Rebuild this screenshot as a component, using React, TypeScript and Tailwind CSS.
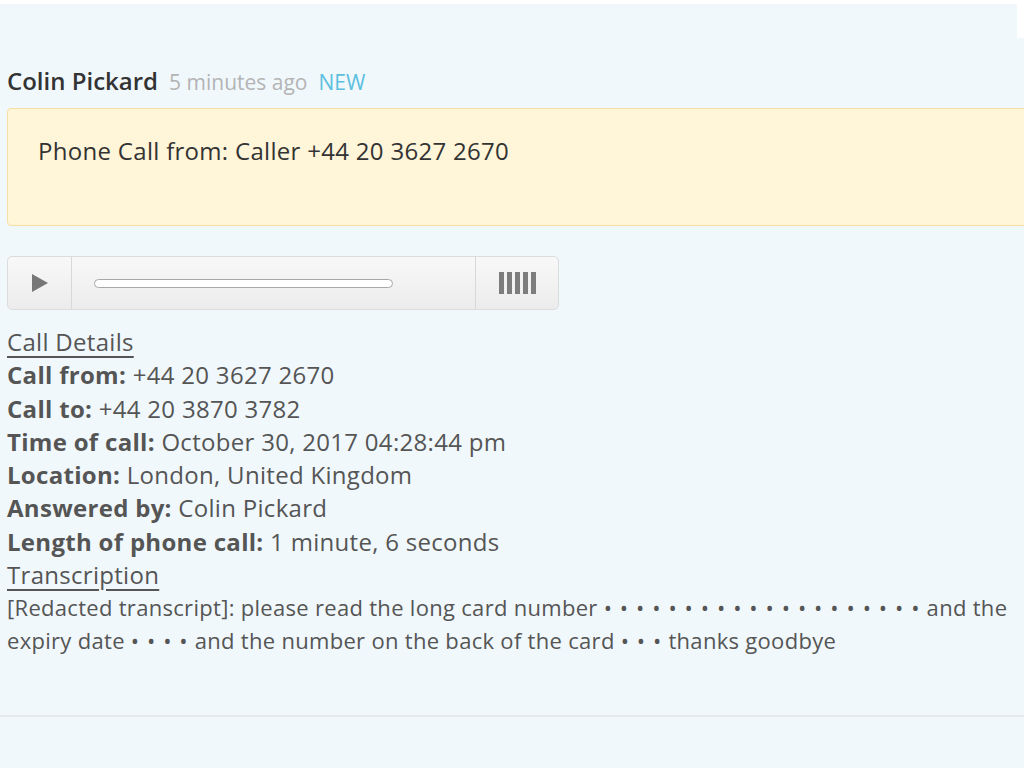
const font = { fontFamily: '"Open Sans", "Noto Sans", sans-serif' };

function Detail({ label, value }: { label: string; value: string }) {
    return (
        <div className="h-[33.3px] leading-[33.3px]">
            <span className="font-bold">{label}</span> {value}
        </div>
    );
}

function Dots({ n }: { n: number }) {
    return <span className="tracking-[1.1px]">{Array(n).fill("•").join(" ")}</span>;
}

function AudioPlayer() {
    return (
        <div className="flex h-[54px] w-[552px] rounded-[5px] border border-[#dcdcdc] bg-gradient-to-b from-[#f8f8f8] to-[#ececec]">
            {/* Play */}
            <div className="flex w-[64px] items-center justify-center border-r border-[#d8d8d8]">
                <svg width="18" height="20" viewBox="0 0 18 20">
                    <polygon points="1,1 17,10 1,19" fill="#777" />
                </svg>
            </div>

            {/* Progress */}
            <div className="flex flex-1 items-center px-[22px]">
                <div className="h-[9px] w-[299px] rounded-full border border-[#a8a8a8] bg-white" />
            </div>

            {/* Volume */}
            <div className="flex w-[83px] items-center justify-center gap-[3px] border-l border-[#d8d8d8]">
                {[0, 1, 2, 3, 4].map((i) => (
                    <div key={i} className="h-[22px] w-[5px] bg-[#7d7d7d]" />
                ))}
            </div>
        </div>
    );
}

export default function App() {
    return (
        <div className="relative min-h-[768px] w-[1024px] overflow-hidden bg-white pt-[4px]" style={font}>
            <div className="absolute right-0 top-0 h-[38px] w-[7px] bg-white" />
            <div className="min-h-[764px] bg-[#f0f8fc] text-[#555]">
                {/* Header */}
                <div className="flex items-baseline px-[7px] pt-[59px]">
                    <span className="text-[24px] font-semibold text-[#333]">Colin Pickard</span>
                    <span className="ml-[11px] text-[21px] text-[#b4b4b4]">5 minutes ago</span>
                    <span className="ml-[11px] text-[21px] text-[#5bc0de]">NEW</span>
                </div>

                {/* Message */}
                <div className="ml-[7px] mt-[9px] h-[118px] w-[1030px] rounded-[4px] border border-[#f5dfa2] bg-[#fff5d9] pl-[30px] pt-[24px] text-[24px] tracking-[0.3px] text-[#333]">
                    Phone Call from: Caller +44 20 3627 2670
                </div>

                <div className="ml-[7px] mt-[30px]">
                    <AudioPlayer />
                </div>

                {/* Details */}
                <div className="mt-[15px] pl-[7px] pr-[4px] text-[24px] tracking-[0.3px]">
                    <div className="h-[33.3px] leading-[33.3px] underline underline-offset-[5px]">Call Details</div>
                    <Detail label="Call from:" value="+44 20 3627 2670" />
                    <Detail label="Call to:" value="+44 20 3870 3782" />
                    <Detail label="Time of call:" value="October 30, 2017 04:28:44 pm" />
                    <Detail label="Location:" value="London, United Kingdom" />
                    <Detail label="Answered by:" value="Colin Pickard" />
                    <Detail label="Length of phone call:" value="1 minute, 6 seconds" />
                    <div className="h-[33.3px] leading-[33.3px] underline underline-offset-[5px]">Transcription</div>
                    <p className="text-[22px] leading-[33px] tracking-[0.3px]">
                        [Redacted transcript]: please read the long card number <Dots n={20} /> and the expiry date <Dots n={4} /> and the number on the back of the card <Dots n={3} /> thanks goodbye
                    </p>
                </div>

                <div className="mt-[58px] h-[2px] bg-[#e4e9ec]" />
            </div>
        </div>
    );
}
